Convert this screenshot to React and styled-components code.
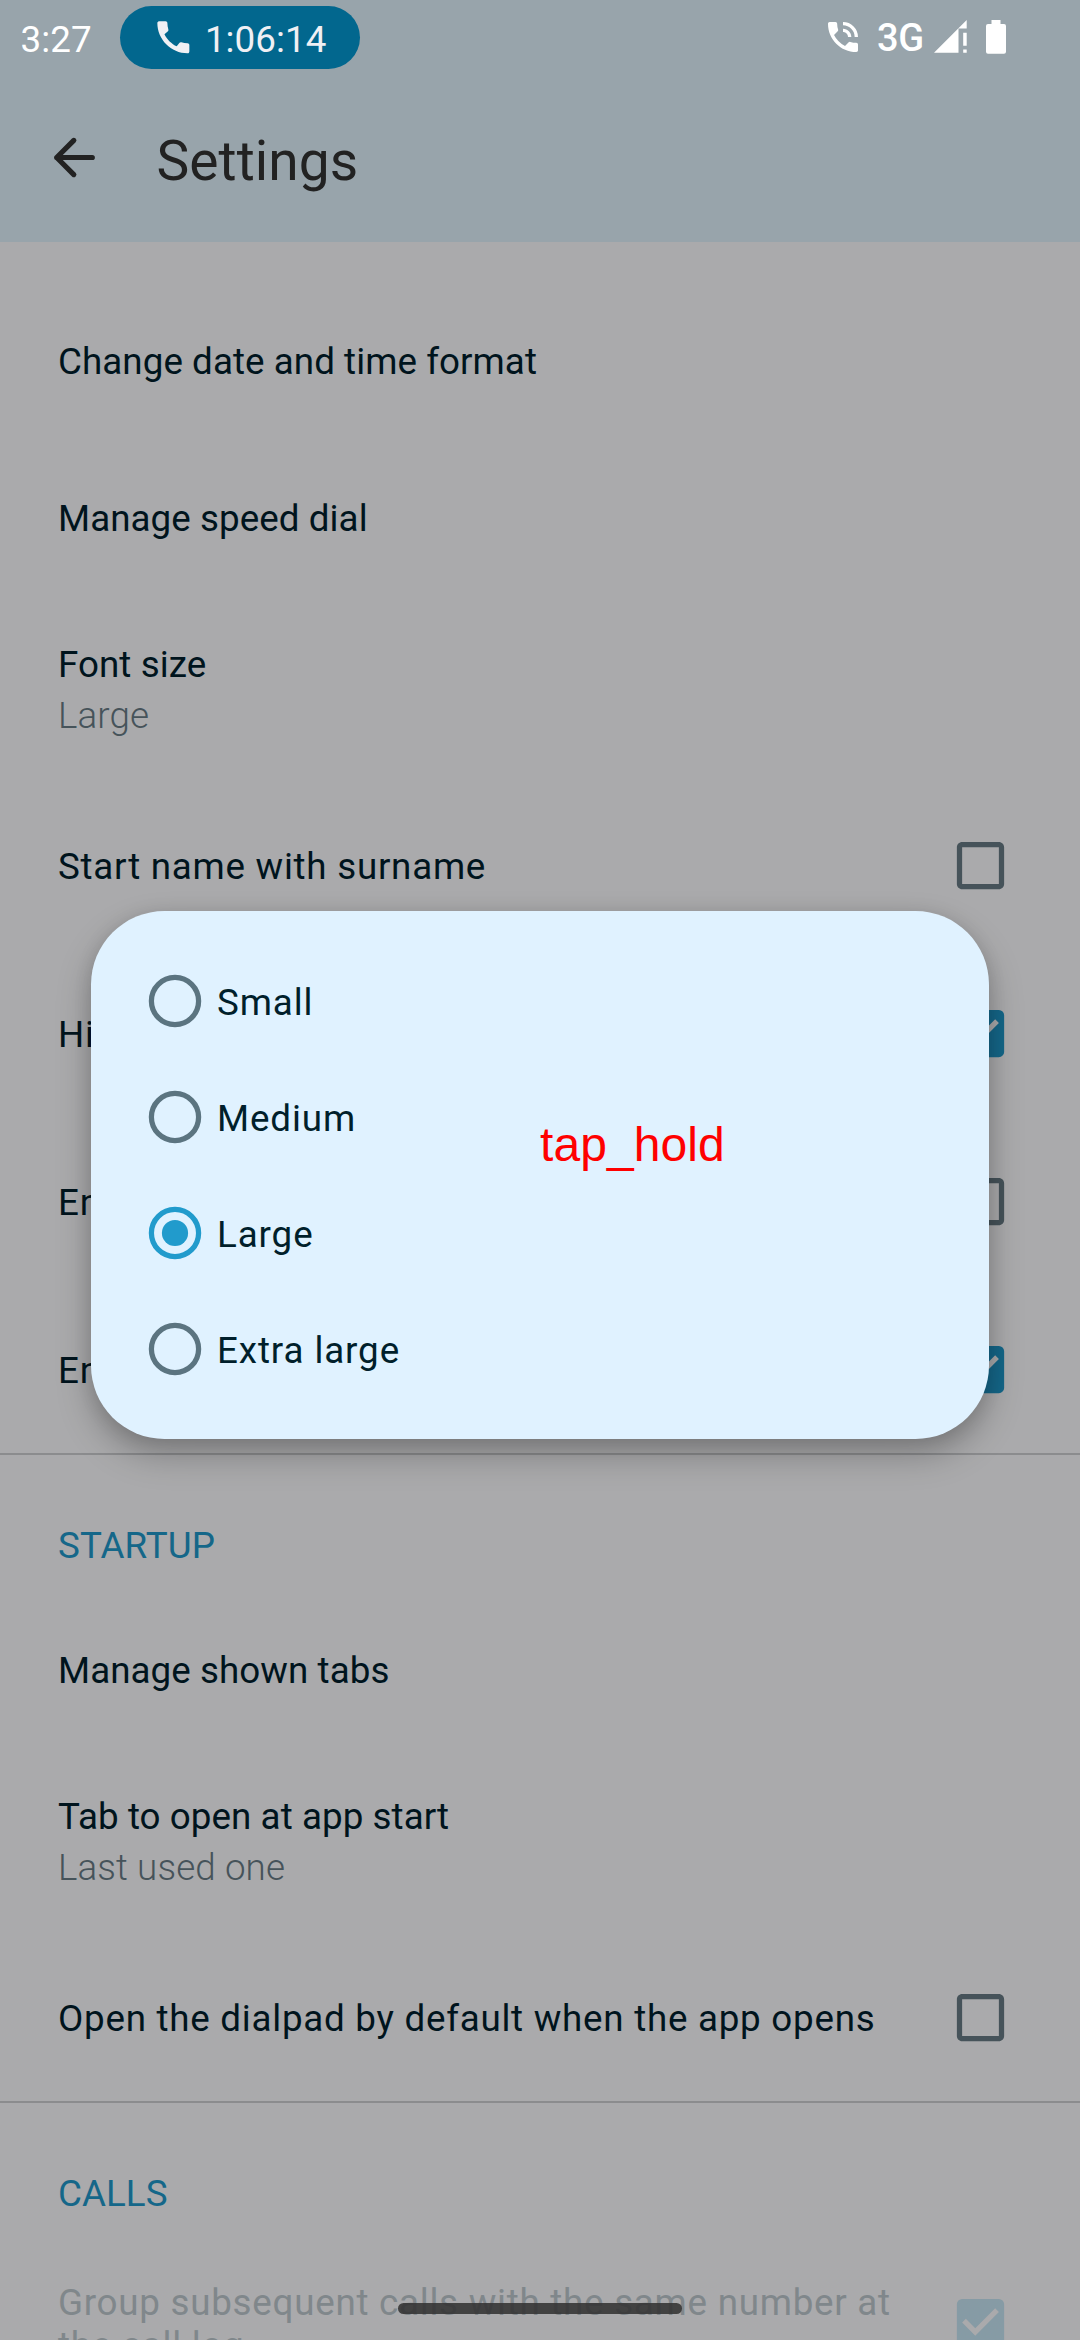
import React from "react";
import styled, { createGlobalStyle } from "styled-components";
import { MdCall, MdCheckBox, MdCheckBoxOutlineBlank, MdPhoneInTalk } from "react-icons/md";

const GlobalStyle = createGlobalStyle`
  *, *::before, *::after { box-sizing: border-box; }
  body { margin: 0; background: #aaaaac; }
`;

const Screen = styled.div`
  position: relative;
  width: 1080px;
  height: 2340px;
  overflow: hidden;
  background: #aaaaac;
  color: #00141d;
  font-family: Roboto, "Noto Sans", sans-serif;
  font-size: 36.75px;
  line-height: 43px;
  letter-spacing: 0.06px;
  white-space: nowrap;
`;

const Header = styled.header`
  height: 242px;
  background: #98a4ab;
`;

const StatusBar = styled.div`
  display: flex;
  align-items: flex-start;
  height: 75px;
  padding: 6px 74px 0 20.5px;
  color: #fff;
`;

const Clock = styled.span`
  width: 99.5px;
  padding-top: 12px;
`;

const CallChip = styled.div`
  display: flex;
  align-items: flex-start;
  width: 240px;
  height: 63px;
  padding: 9.7px 0 0 31.7px;
  border-radius: 32px;
  background: #02678e;
  color: #f0f0f4;

  svg { display: block; width: 42.7px; height: 42.7px; }
  span { margin: 2.3px 0 0 10.5px; }
`;

const StatusIcons = styled.div`
  display: flex;
  align-items: flex-start;
  margin-left: auto;

  svg { display: block; }
`;

const TalkIcon = styled(MdPhoneInTalk)`
  width: 40px;
  height: 40px;
  margin: 11.2px 14px 0 0;
`;

const Network = styled.span`
  width: 57px;
  padding-top: 10.5px;
  font-size: 38px;
  font-weight: 500;
  letter-spacing: -0.3px;
`;

const SignalIcon = styled.svg`
  width: 33px;
  height: 33px;
  margin: 20px 19px 0 0;
  margin-top: 14px;
`;

const BatteryIcon = styled.svg`
  width: 20px;
  height: 34px;
  margin-top: 14px;
`;

const Toolbar = styled.div`
  display: flex;
  align-items: flex-start;
  padding-left: 52px;
  color: #222;

  svg { display: block; margin-top: 60px; }
`;

const Title = styled.h1`
  margin: 54px 0 0 58.5px;
  font-size: 55.1px;
  font-weight: 400;
  line-height: 64px;
`;

const List = styled.main`
  padding-top: 41px;
`;

const Section = styled.section`
  border-bottom: 2px solid #8b8c8e;
`;

const SectionLabel = styled.h2`
  height: 137px;
  margin: 0;
  padding: 69px 58px 0;
  color: #156789;
  font-size: inherit;
  font-weight: 400;
`;

const Row = styled.div`
  height: 157px;
  padding: 57px 58px 0;
`;

const ValueRow = styled.div`
  height: 184px;
  padding: 46px 58px 0;
`;

const Value = styled.div`
  margin-top: 8px;
  color: #46535a;
  font-weight: 300;
  letter-spacing: 0.12px;
`;

const CheckRow = styled.div`
  display: flex;
  align-items: center;
  justify-content: space-between;
  height: ${(p) => (p.$tall ? 164 : 168)}px;
  padding: 0 68.3px 0 58px;

  svg {
    display: block;
    width: 63px;
    height: 63px;
    color: ${(p) => (p.$disabled ? "#869ba5" : p.$checked ? "#156789" : "#46535a")};
  }
`;

const CheckLabel = styled.span`
  padding-top: 3px;
  color: ${(p) => (p.$disabled ? "#80878b" : "inherit")};
  letter-spacing: 0.74px;
`;

const Dialog = styled.div`
  position: absolute;
  top: 911px;
  left: 91px;
  display: flex;
  flex-direction: column;
  width: 898px;
  height: 528px;
  padding: 32px 55px;
  border-radius: 73.5px;
  background: #e0f2ff;
  box-shadow: 0 16px 34px rgba(0, 0, 0, 0.26), 0 2px 18px rgba(0, 0, 0, 0.1);
`;

const Option = styled.div`
  display: flex;
  align-items: center;
  height: 116px;
  color: #001f2b;
  letter-spacing: 0.9px;

  svg { display: block; width: 58px; height: 58px; }
  span { padding: 2px 0 0 13px; }
`;

const Annotation = styled.div`
  position: absolute;
  top: 1117px;
  left: 540px;
  color: #f00;
  font-family: "Liberation Sans", Arial, sans-serif;
  font-size: 48px;
  line-height: 55px;
`;

const NavHandle = styled.div`
  position: absolute;
  top: 2303px;
  left: 398px;
  width: 284px;
  height: 11px;
  border-radius: 5.5px;
  background: rgba(50, 50, 50, 0.87);
`;

function CheckSetting({ label, checked, disabled, tall }) {
  return (
    <CheckRow $checked={checked} $disabled={disabled} $tall={tall}>
      <CheckLabel $disabled={disabled}>{label}</CheckLabel>
      {checked ? <MdCheckBox /> : <MdCheckBoxOutlineBlank />}
    </CheckRow>
  );
}

function RadioOption({ label, selected }) {
  const color = selected ? "#219bcc" : "#5b7480";
  return (
    <Option>
      <svg viewBox="-29 -29 58 58">
        <circle r="23.6" fill="none" stroke={color} strokeWidth="5.25" />
        {selected && <circle r="13.1" fill={color} />}
      </svg>
      <span>{label}</span>
    </Option>
  );
}

export default function App() {
  return (
    <Screen>
      <GlobalStyle />
      <Header>
        <StatusBar>
          <Clock>3:27</Clock>
          <CallChip>
            <MdCall />
            <span>1:06:14</span>
          </CallChip>
          <StatusIcons>
            <TalkIcon />
            <Network>3G</Network>
            <SignalIcon viewBox="0 0 33 33" fill="#fff">
              <path d="M0 32.7 32.7 0v8.5h-8.2v24.2z" />
              <path d="M29.2 12.7h3.5v13h-3.5zM29.2 29.5h3.5v3.2h-3.5z" />
            </SignalIcon>
            <BatteryIcon viewBox="0 0 20 34" fill="#fff">
              <path d="M5.5 0h9v4H18a2 2 0 0 1 2 2v25.7a2 2 0 0 1-2 2H2a2 2 0 0 1-2-2V6a2 2 0 0 1 2-2h3.5z" />
            </BatteryIcon>
          </StatusIcons>
        </StatusBar>
        <Toolbar>
          <svg width="46" height="46" viewBox="0 0 46 46" fill="none" stroke="#222" strokeWidth="5.2" strokeLinecap="round" strokeLinejoin="round">
            <path d="M21.8 5.4 4.7 22.5l17.1 17.1M4.7 22.5h35.6" />
          </svg>
          <Title>Settings</Title>
        </Toolbar>
      </Header>

      <List>
        <Section>
          <Row>Change date and time format</Row>
          <Row>Manage speed dial</Row>
          <ValueRow>
            Font size
            <Value>Large</Value>
          </ValueRow>
          <CheckSetting label="Start name with surname" />
          <CheckSetting label="Hi" checked />
          <CheckSetting label="En" />
          <CheckSetting label="En" checked />
        </Section>
        <Section>
          <SectionLabel>STARTUP</SectionLabel>
          <Row>Manage shown tabs</Row>
          <ValueRow>
            Tab to open at app start
            <Value>Last used one</Value>
          </ValueRow>
          <CheckSetting label="Open the dialpad by default when the app opens" />
        </Section>
        <Section>
          <SectionLabel>CALLS</SectionLabel>
          <CheckSetting
            label={<>Group subsequent calls with the same number at<br />the call log</>}
            checked
            disabled
            tall
          />
        </Section>
      </List>

      <Dialog>
        <RadioOption label="Small" />
        <RadioOption label="Medium" />
        <RadioOption label="Large" selected />
        <RadioOption label="Extra large" />
      </Dialog>
      <Annotation>tap_hold</Annotation>
      <NavHandle />
    </Screen>
  );
}
